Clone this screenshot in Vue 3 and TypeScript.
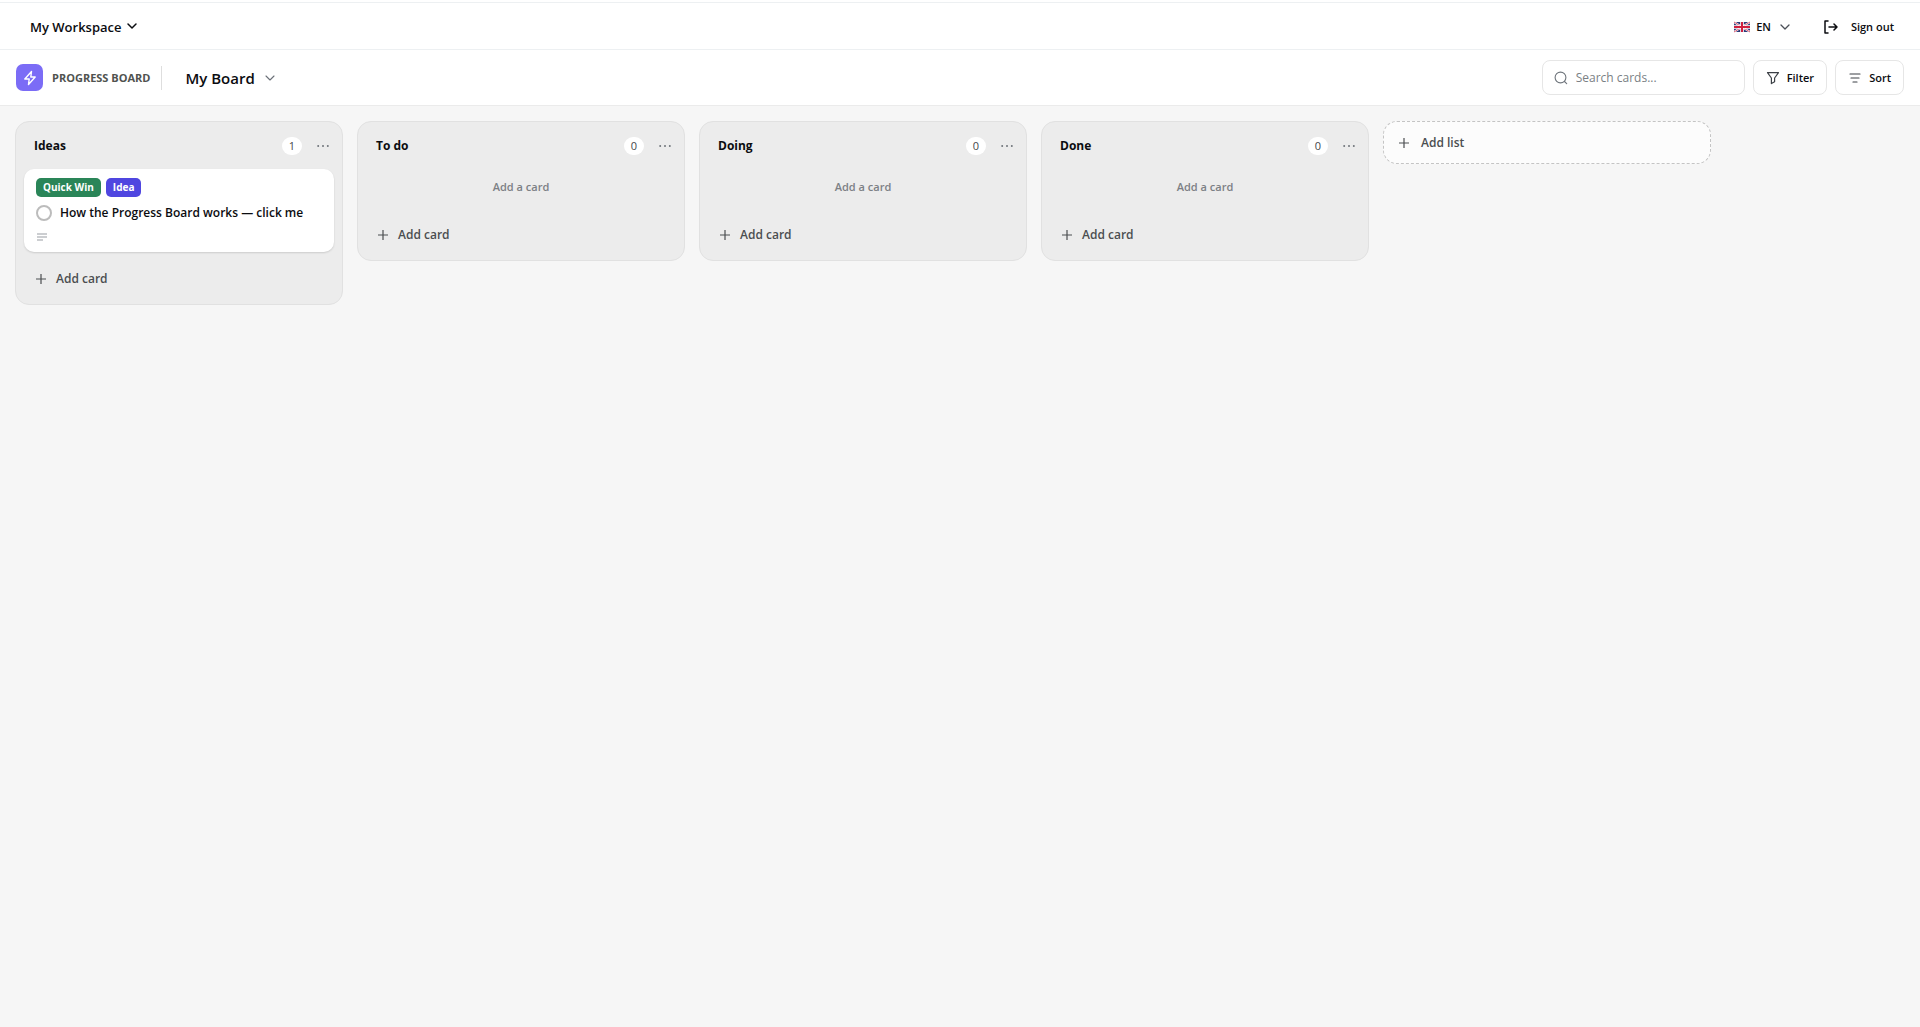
<script setup lang="ts">
import { ref, computed } from 'vue'

interface Label { text: string; color: string }
interface Card { id: number; title: string; labels: Label[]; done: boolean }
interface List { id: number; name: string; cards: Card[] }

const search = ref('')
const lists = ref<List[]>([
  {
    id: 1,
    name: 'Ideas',
    cards: [
      {
        id: 1,
        title: 'How the Progress Board works — click me',
        labels: [
          { text: 'Quick Win', color: 'green' },
          { text: 'Idea', color: 'indigo' },
        ],
        done: false,
      },
    ],
  },
  { id: 2, name: 'To do', cards: [] },
  { id: 3, name: 'Doing', cards: [] },
  { id: 4, name: 'Done', cards: [] },
])

const visibleLists = computed(() =>
  lists.value.map((list) => ({
    ...list,
    cards: list.cards.filter((c) => c.title.toLowerCase().includes(search.value.toLowerCase())),
  })),
)
</script>

<template>
  <div class="app">
    <header class="topbar">
      <button type="button" class="plain workspace">
        My Workspace
        <svg width="12" height="12" viewBox="0 0 12 12" fill="none" stroke="currentColor" stroke-width="1.5" stroke-linecap="round" stroke-linejoin="round"><path d="M2 3l4 4 4-4" /></svg>
      </button>
      <div class="account">
        <button type="button" class="plain language">
          <svg class="flag" width="16" height="16" viewBox="0 0 16 16">
            <rect x="0" y="3" width="16" height="10" fill="#2b3a78" />
            <path d="M0 3l16 10M16 3L0 13" stroke="#fff" stroke-width="2" />
            <path d="M0 3l16 10M16 3L0 13" stroke="#d2304c" stroke-width="0.8" />
            <path d="M8 3v10M0 8h16" stroke="#fff" stroke-width="3.6" />
            <path d="M8 3v10M0 8h16" stroke="#cf1f3f" stroke-width="2" />
          </svg>
          EN
          <svg class="lang-chevron" width="12" height="12" viewBox="0 0 12 12" fill="none" stroke="#4b5058" stroke-width="1.3" stroke-linecap="round" stroke-linejoin="round"><path d="M2 4l4 4 4-4" /></svg>
        </button>
        <button type="button" class="plain signout">
          <svg width="14" height="14" viewBox="0 0 14 14" fill="none" stroke="currentColor" stroke-width="1.5" stroke-linecap="round" stroke-linejoin="round"><path d="M4 1H1v12h3M5 7h8M10 4l3 3-3 3" /></svg>
          Sign out
        </button>
      </div>
    </header>

    <div class="boardbar">
      <div class="brand">
        <span class="logo">
          <svg width="16" height="16" viewBox="0 0 16 16" fill="none" stroke="#fff" stroke-width="1.4" stroke-linejoin="round"><path d="M9.5 1.5L2.8 9h4.4L6.5 14.5 13.2 7H8.8z" /></svg>
        </span>
        <span class="product">PROGRESS BOARD</span>
        <span class="divider"></span>
        <h1>
          <button type="button" class="plain board-name">
            My Board
            <svg width="10" height="10" viewBox="0 0 10 10" fill="none" stroke="#6b7078" stroke-width="1.1" stroke-linecap="round" stroke-linejoin="round"><path d="M1 3l4 4 4-4" /></svg>
          </button>
        </h1>
      </div>
      <div class="tools">
        <label class="search">
          <svg width="14" height="14" viewBox="0 0 14 14" fill="none" stroke="#6f757c" stroke-width="1.1" stroke-linecap="round"><circle cx="6.5" cy="6.5" r="5.4" /><path d="M10.5 10.5l2.2 2.2" /></svg>
          <input v-model="search" type="text" placeholder="Search cards..." aria-label="Search cards" />
        </label>
        <button type="button" class="tool">
          <svg width="14" height="14" viewBox="0 0 14 14" fill="none" stroke="#3c4046" stroke-width="1.2" stroke-linejoin="round"><path d="M1.5 1.6h11L8.6 7v3.8l-3.2 1.8V7z" /></svg>
          Filter
        </button>
        <button type="button" class="tool">
          <svg width="14" height="14" viewBox="0 0 14 14" fill="none" stroke="#3c4046" stroke-width="1.2" stroke-linecap="round"><path d="M2 3h10M3 7h8M5 11h4" /></svg>
          Sort
        </button>
      </div>
    </div>

    <main class="board">
      <section v-for="list in visibleLists" :key="list.id" class="list">
        <header class="list-head">
          <h2>{{ list.name }}</h2>
          <span class="count">{{ list.cards.length }}</span>
          <button type="button" class="plain more" aria-label="List actions">
            <svg width="12" height="4" viewBox="0 0 12 4" fill="#6f747a"><circle cx="1.2" cy="2" r="1" /><circle cx="6" cy="2" r="1" /><circle cx="10.8" cy="2" r="1" /></svg>
          </button>
        </header>

        <article v-for="card in list.cards" :key="card.id" class="card">
          <div class="labels">
            <span v-for="label in card.labels" :key="label.text" class="label" :class="label.color">{{ label.text }}</span>
          </div>
          <label class="card-title">
            <input v-model="card.done" type="checkbox" />
            {{ card.title }}
          </label>
          <svg class="description" width="12" height="8" viewBox="0 0 12 8" stroke="#9a9ea4" stroke-width="1.2"><path d="M1 1h10M1 4h10M1 7h6" /></svg>
        </article>
        <p v-if="!list.cards.length" class="empty">Add a card</p>

        <button type="button" class="plain add">
          <svg width="10" height="10" viewBox="0 0 10 10" stroke="currentColor" stroke-width="1.2"><path d="M5 0v10M0 5h10" /></svg>
          Add card
        </button>
      </section>

      <button type="button" class="add-list">
        <svg width="10" height="10" viewBox="0 0 10 10" stroke="currentColor" stroke-width="1.2"><path d="M5 0v10M0 5h10" /></svg>
        Add list
      </button>
    </main>
  </div>
</template>

<style>
body {
  background: #f6f6f6;
}
</style>

<style scoped>
.app {
  padding-top: 2px;
  background: linear-gradient(#fff 0 2px, #f6f6f6 2px);
  color: #0b0c10;
  font-family: "Segoe UI", "Open Sans", "Noto Sans", sans-serif;
  font-size: 12px;
  font-weight: 600;
  line-height: 20px;
}
button,
input {
  font: inherit;
  color: inherit;
}
svg {
  flex: none;
  display: block;
}
.plain {
  display: flex;
  align-items: center;
  padding: 0;
  border: 0;
  background: none;
  cursor: pointer;
}
h1,
h2,
p {
  margin: 0;
  font-size: inherit;
}

.topbar {
  display: flex;
  align-items: center;
  justify-content: space-between;
  height: 44px;
  padding: 2px 26px 0 30px;
  border-top: 1px solid #edf0f2;
  border-bottom: 1px solid #edf0f2;
  background: #fff;
}
.workspace {
  gap: 4px;
  font-size: 13px;
}
.account {
  display: flex;
  align-items: center;
  gap: 33px;
  font-size: 11px;
}
.language {
  gap: 6px;
}
.lang-chevron {
  margin-left: 2px;
}
.flag {
  border-radius: 2px;
}
.signout {
  gap: 13px;
}

.boardbar {
  display: flex;
  align-items: center;
  justify-content: space-between;
  height: 55px;
  padding: 0 16px;
  border-bottom: 1px solid #ebebeb;
  background: #fff;
}
.brand,
.tools {
  display: flex;
  align-items: center;
}
.logo {
  display: grid;
  place-items: center;
  width: 27px;
  height: 27px;
  border-radius: 7px;
  background: #7b6cf6;
}
.product {
  margin-left: 9px;
  color: #50534f;
  font-size: 11px;
  font-weight: 700;
}
.divider {
  width: 1px;
  height: 24px;
  margin: 0 23px 0 11px;
  background: #dedede;
}
.board-name {
  gap: 10px;
  font-size: 15px;
  font-weight: 600;
}
.tools {
  gap: 8px;
}
.search,
.tool {
  display: flex;
  align-items: center;
  box-sizing: border-box;
  height: 35px;
  border: 1px solid #e6e6e6;
  border-radius: 8px;
  background: #fff;
}
.search {
  width: 203px;
  padding: 0 11px;
  gap: 8px;
}
.search input {
  flex: 1;
  min-width: 0;
  padding: 0;
  border: 0;
  outline: 0;
  background: none;
  font-weight: 400;
}
.search input::placeholder {
  color: #7a7f84;
  opacity: 1;
}
.tool {
  gap: 7px;
  padding: 0 12px;
  font-size: 11px;
}

.board {
  display: flex;
  align-items: flex-start;
  gap: 14px;
  padding: 15px;
}
.list,
.add-list {
  box-sizing: border-box;
  flex: 0 0 328px;
  border-radius: 14px;
}
.list {
  padding: 8px 8px 9px;
  border: 1px solid #e1e1e1;
  background: #ececec;
}
.list-head {
  display: flex;
  align-items: center;
  height: 32px;
  margin-bottom: 7px;
  padding: 0 5px 0 10px;
}
h2 {
  flex: 1;
  font-weight: 700;
}
.count {
  min-width: 20px;
  height: 18px;
  border-radius: 9px;
  background: #fff;
  color: #45484c;
  font-size: 11px;
  font-weight: 500;
  line-height: 18px;
  text-align: center;
}
.more {
  margin-left: 15px;
}
.card {
  padding: 9px 12px 11px;
  border-radius: 10px;
  background: #fff;
  box-shadow: 0 1px 2px rgba(0, 0, 0, 0.14);
}
.labels {
  display: flex;
  gap: 5px;
}
.label {
  padding: 0 7px;
  border-radius: 5px;
  color: #fff;
  font-size: 10px;
  font-weight: 700;
  line-height: 19px;
}
.green {
  background: #2a8558;
}
.indigo {
  background: #4f46e0;
}
.card-title {
  display: flex;
  align-items: center;
  gap: 8px;
  margin: 6px 0 10px;
}
.card-title input {
  appearance: none;
  flex: none;
  width: 16px;
  height: 16px;
  margin: 0;
  border: 2px solid #bcbcbc;
  border-radius: 50%;
}
.empty {
  padding: 8px 0 11px;
  color: #7c8085;
  font-size: 11px;
  text-align: center;
}
.add {
  gap: 10px;
  width: 100%;
  height: 32px;
  margin-top: 11px;
  padding: 0 12px;
  color: #4b4e50;
}
.add-list {
  display: flex;
  align-items: center;
  gap: 12px;
  height: 43px;
  padding: 0 15px;
  border: 1px dashed #c4c4c4;
  background: #fcfcfc;
  color: #4b4e50;
  cursor: pointer;
}
</style>
